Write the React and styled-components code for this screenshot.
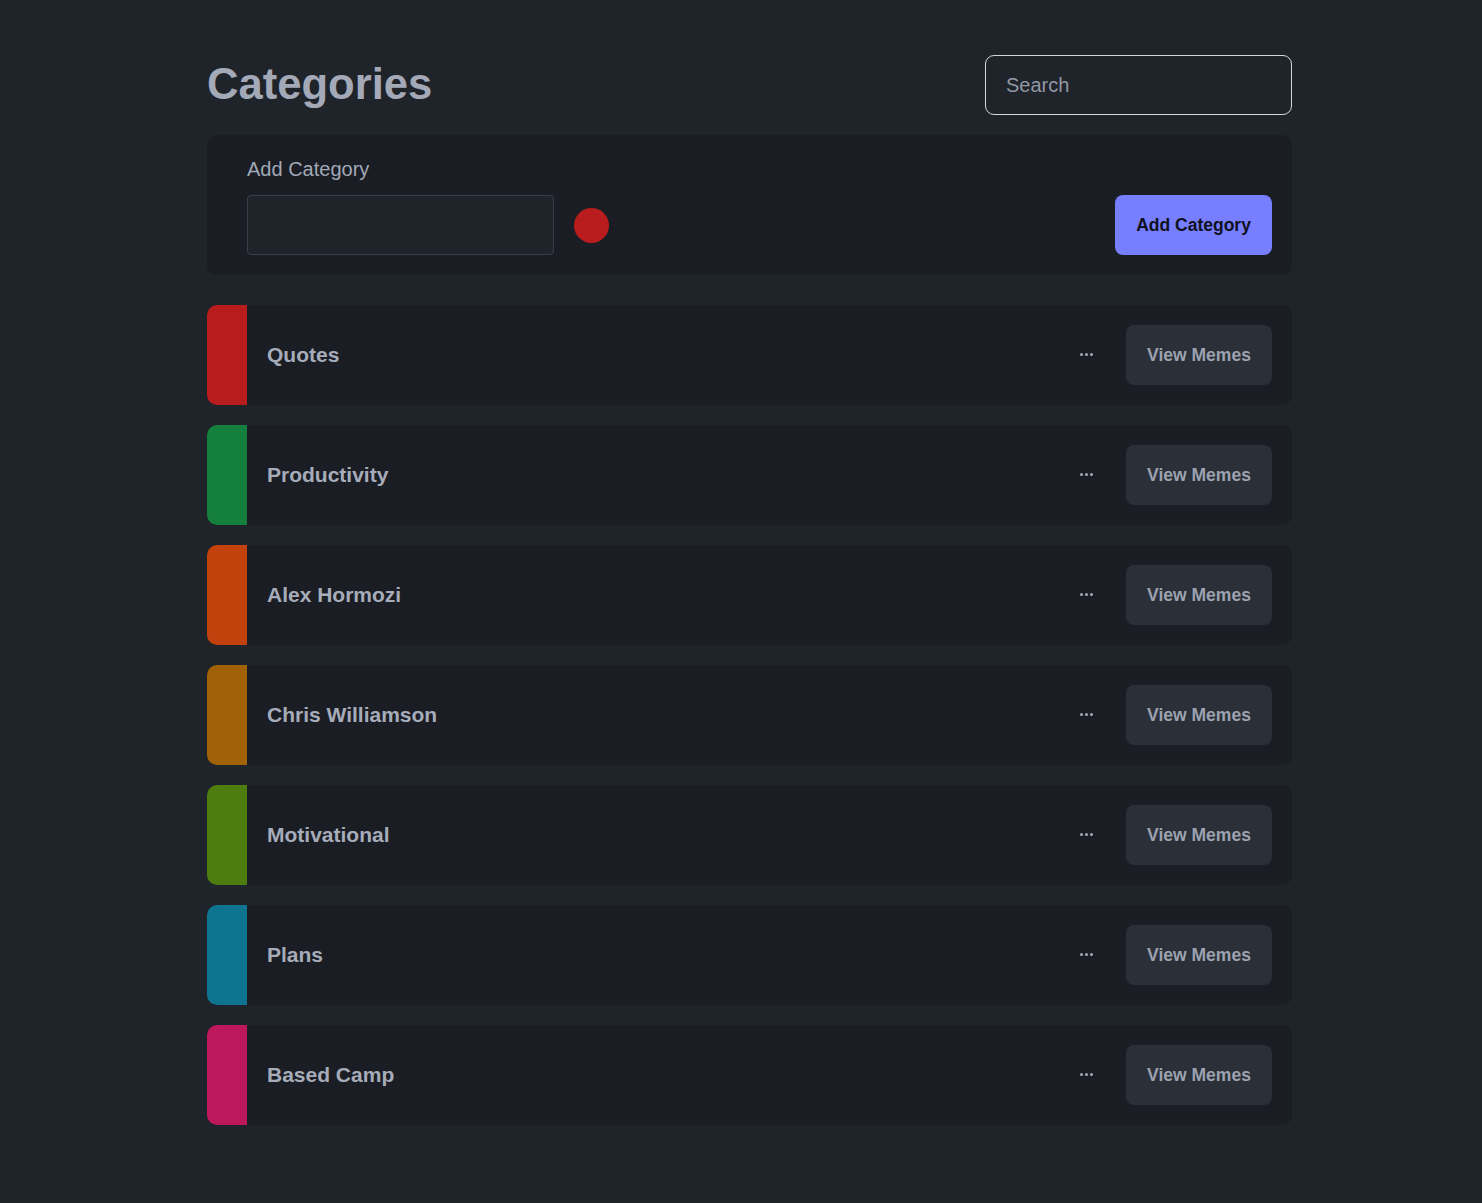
import React, { useState } from "react";
import styled, { createGlobalStyle } from "styled-components";

const GlobalStyle = createGlobalStyle`
  * {
    box-sizing: border-box;
  }

  html,
  body {
    margin: 0;
    padding: 0;
    background: #1f232a;
    font-family: "Liberation Sans", Arial, sans-serif;
  }
`;

const Page = styled.div`
  min-height: 1203px;
  padding: 55px 0 60px 207px;
`;

const Container = styled.div`
  width: 1085px;
  display: flex;
  flex-direction: column;
`;

const Header = styled.div`
  display: flex;
  align-items: center;
  justify-content: space-between;
  height: 60px;
  margin-bottom: 20px;
`;

const Title = styled.h1`
  margin: 0;
  font-size: 43.6px;
  font-weight: 700;
  color: #a3a9b7;
  line-height: 1;
`;

const Search = styled.input`
  width: 307px;
  height: 60px;
  padding: 0 20px;
  border: 1px solid #d4d7de;
  border-radius: 9px;
  background: #1f232a;
  color: #c8ccd4;
  font-family: inherit;
  font-size: 20px;
  outline: none;

  &::placeholder {
    color: #9298a4;
  }
`;

const AddCard = styled.div`
  background: #1a1d24;
  border-radius: 10px;
  padding: 22px 20px 20px 40px;
  display: flex;
  flex-direction: column;
  gap: 13px;
  margin-bottom: 30px;
`;

const Label = styled.label`
  font-size: 20px;
  color: #a3a9b7;
  line-height: 25px;
`;

const AddRow = styled.div`
  display: flex;
  align-items: center;
`;

const NameInput = styled.input`
  width: 307px;
  height: 60px;
  border: 1px solid #3a3e47;
  border-radius: 4px;
  background: #1f232a;
  color: #c8ccd4;
  font-family: inherit;
  font-size: 18px;
  padding: 0 14px;
  outline: none;
`;

const ColorDot = styled.button`
  width: 35px;
  height: 35px;
  border: none;
  border-radius: 50%;
  margin-left: 20px;
  background: ${({ color }) => color};
  padding: 0;
  cursor: pointer;
`;

const PrimaryButton = styled.button`
  margin-left: auto;
  height: 60px;
  width: 157px;
  border: none;
  border-radius: 8px;
  background: #777eff;
  color: #0f1120;
  font-family: inherit;
  font-size: 17.5px;
  font-weight: 700;
  cursor: pointer;
`;

const List = styled.div`
  display: flex;
  flex-direction: column;
  gap: 20px;
`;

const Row = styled.div`
  display: flex;
  align-items: center;
  height: 100px;
  background: #1a1d24;
  border-radius: 10px;
  overflow: hidden;
  padding-right: 20px;
`;

const Strip = styled.div`
  width: 40px;
  align-self: stretch;
  background: ${({ color }) => color};
`;

const Name = styled.div`
  flex: 1;
  padding-left: 20px;
  padding-bottom: 1px;
  font-size: 21px;
  font-weight: 700;
  color: #a6acb9;
`;

const MoreButton = styled.button`
  width: 40px;
  height: 60px;
  border: none;
  background: transparent;
  display: flex;
  align-items: center;
  justify-content: center;
  margin-right: 20px;
  padding: 0 0 1px;
  cursor: pointer;
`;

const ViewButton = styled.button`
  width: 146px;
  height: 60px;
  border: none;
  border-radius: 8px;
  background: #2a2f38;
  color: #9ca2af;
  font-family: inherit;
  font-size: 17.5px;
  font-weight: 700;
  padding-bottom: 1px;
  cursor: pointer;
`;

const categories = [
  { name: "Quotes", color: "#b91c1c" },
  { name: "Productivity", color: "#15803d" },
  { name: "Alex Hormozi", color: "#c2410c" },
  { name: "Chris Williamson", color: "#a16207" },
  { name: "Motivational", color: "#4d7c0f" },
  { name: "Plans", color: "#0e7490" },
  { name: "Based Camp", color: "#be185d" },
];

const Dots = () => (
  <svg width="13" height="3" viewBox="0 0 13 3">
    <circle cx="1.5" cy="1.5" r="1.5" fill="#a3a9b7" />
    <circle cx="6.5" cy="1.5" r="1.5" fill="#a3a9b7" />
    <circle cx="11.5" cy="1.5" r="1.5" fill="#a3a9b7" />
  </svg>
);

const App = () => {
  const [search, setSearch] = useState("");
  const [name, setName] = useState("");

  const filtered = categories.filter((c) =>
    c.name.toLowerCase().includes(search.toLowerCase())
  );

  return (
    <>
      <GlobalStyle />
      <Page>
        <Container>
          <Header>
            <Title>Categories</Title>
            <Search
              placeholder="Search"
              value={search}
              onChange={(e) => setSearch(e.target.value)}
            />
          </Header>

          <AddCard>
            <Label>Add Category</Label>
            <AddRow>
              <NameInput value={name} onChange={(e) => setName(e.target.value)} />
              <ColorDot color="#b91c1c" />
              <PrimaryButton>Add Category</PrimaryButton>
            </AddRow>
          </AddCard>

          <List>
            {filtered.map((c) => (
              <Row key={c.name}>
                <Strip color={c.color} />
                <Name>{c.name}</Name>
                <MoreButton>
                  <Dots />
                </MoreButton>
                <ViewButton>View Memes</ViewButton>
              </Row>
            ))}
          </List>
        </Container>
      </Page>
    </>
  );
};

export default App;
